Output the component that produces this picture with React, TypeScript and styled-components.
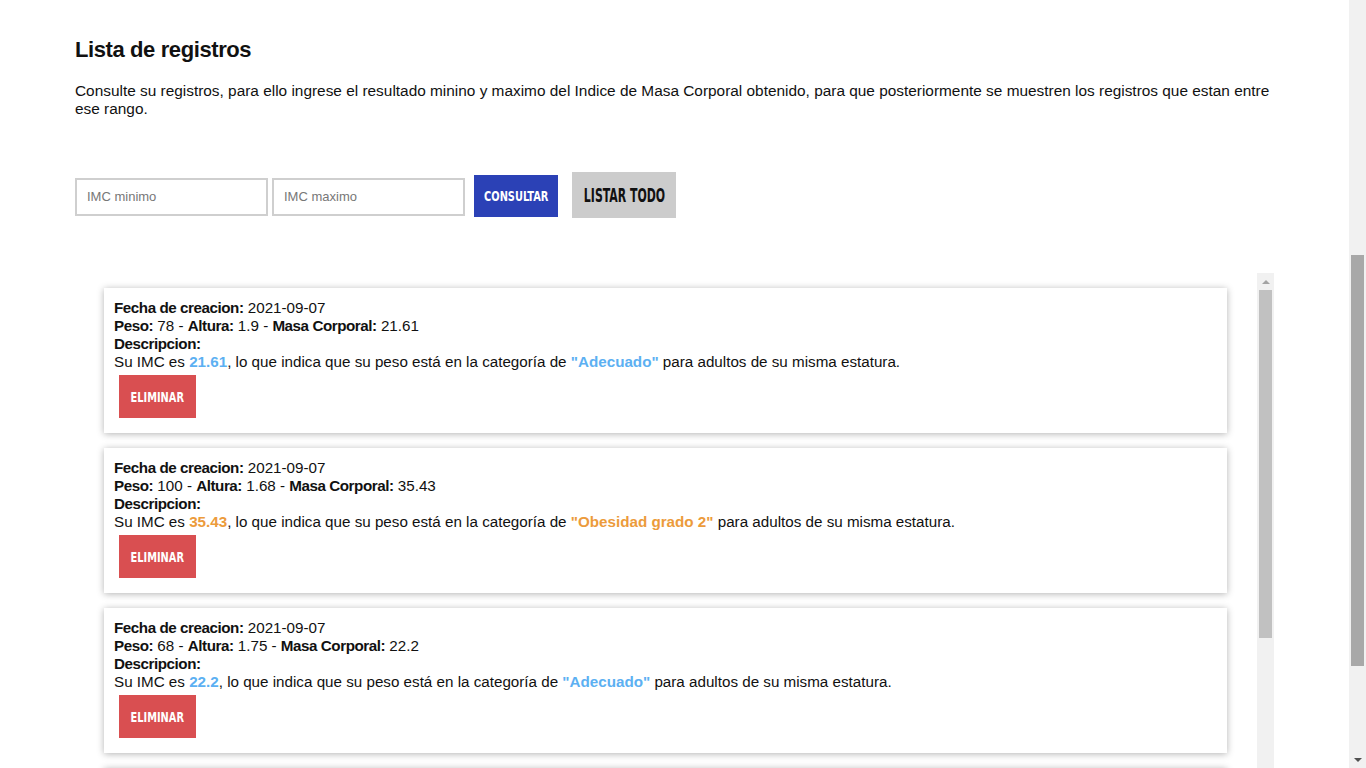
import React from "react";
import styled, { createGlobalStyle } from "styled-components";

const GlobalStyle = createGlobalStyle`
  html, body {
    margin: 0;
    padding: 0;
    background: #fff;
    color: #111;
    font-family: "Liberation Sans", Arial, sans-serif;
  }
`;

const Page = styled.main`
  padding: 36px 92px 0 75px;
`;

const Title = styled.h2`
  margin: 0 0 18px;
  font-size: 22px;
  font-weight: 700;
  letter-spacing: -0.4px;
  line-height: 28px;
`;

const Intro = styled.p`
  margin: 0;
  font-size: 15.4px;
  line-height: 18px;
`;

const Toolbar = styled.div`
  display: flex;
  align-items: center;
  gap: 4px;
  margin-top: 54px;
  height: 46px;
`;

const Input = styled.input`
  box-sizing: border-box;
  width: 193px;
  height: 38px;
  margin-top: 3px;
  border: 2px solid #cfcfcf;
  padding: 0 10px;
  font-family: "Liberation Sans", Arial, sans-serif;
  font-size: 13px;
  outline: none;
  &::placeholder {
    color: #777;
  }
`;

const Button = styled.button<{ $variant: "blue" | "gray" | "red" }>`
  border: none;
  cursor: pointer;
  padding: 0;
  display: flex;
  align-items: center;
  justify-content: center;
  ${({ $variant }) =>
    $variant === "blue"
      ? `background:#2b41b6;color:#fff;width:84px;height:42px;font-size:14px;margin-left:5px;margin-top:1px;`
      : $variant === "gray"
      ? `background:#cccccc;color:#111;width:104px;height:46px;font-size:19px;margin-left:10px;`
      : `background:#d94f51;color:#fff;width:77px;height:43px;font-size:14px;`}
`;

const ButtonText = styled.span<{ $squeeze?: number }>`
  display: inline-block;
  font-family: "DejaVu Sans Condensed", "DejaVu Sans", sans-serif;
  font-stretch: condensed;
  font-weight: 700;
  text-transform: uppercase;
  white-space: nowrap;
  transform: scaleX(${({ $squeeze }) => $squeeze ?? 0.78});
`;

const ListFrame = styled.div`
  display: flex;
  margin-top: 55px;
  height: 560px;
`;

const ListScroll = styled.div`
  flex: 1;
  overflow: hidden;
  padding: 15px 30px 0 29px;
  display: flex;
  flex-direction: column;
  gap: 15px;
`;

const ScrollTrack = styled.div<{ $fixed?: boolean }>`
  flex: none;
  width: 17px;
  background: #f1f1f1;
  display: flex;
  flex-direction: column;
  align-items: center;
  ${({ $fixed }) =>
    $fixed ? "position: fixed; top: 0; right: 0; bottom: 0;" : ""}
`;

const ScrollArrow = styled.div<{ $dir: "up" | "down" }>`
  flex: none;
  height: 17px;
  width: 17px;
  display: flex;
  align-items: center;
  justify-content: center;
  &::before {
    content: "";
    border-left: 4px solid transparent;
    border-right: 4px solid transparent;
    ${({ $dir }) =>
      $dir === "up" ? "border-bottom: 4px solid #a3a3a3;" : "border-top: 4px solid #505050;"}
  }
`;

const ScrollThumb = styled.div<{ $top: number; $size: number; $color: string }>`
  flex: none;
  width: 13px;
  margin-top: ${({ $top }) => $top}px;
  height: ${({ $size }) => $size}px;
  background: ${({ $color }) => $color};
`;

const Spacer = styled.div`
  flex: 1;
`;

const Card = styled.div`
  flex: none;
  background: #fff;
  box-shadow: 0 1px 7px rgba(0, 0, 0, 0.3);
  padding: 11px 10px 15px;
  font-size: 15.2px;
  line-height: 18px;
`;

const Label = styled.b`
  font-weight: 700;
  letter-spacing: -0.45px;
`;

const Highlight = styled.b<{ $color: string }>`
  color: ${({ $color }) => $color};
  font-weight: 700;
`;

const Actions = styled.div`
  margin-top: 4px;
  padding-left: 5px;
`;

type Registro = {
  fecha: string;
  peso: number;
  altura: number;
  imc: number;
  categoria: string;
  color: string;
};

const registros: Registro[] = [
  { fecha: "2021-09-07", peso: 78, altura: 1.9, imc: 21.61, categoria: "Adecuado", color: "#5cb0f2" },
  { fecha: "2021-09-07", peso: 100, altura: 1.68, imc: 35.43, categoria: "Obesidad grado 2", color: "#ec9b3b" },
  { fecha: "2021-09-07", peso: 68, altura: 1.75, imc: 22.2, categoria: "Adecuado", color: "#5cb0f2" },
  { fecha: "2021-09-07", peso: 55, altura: 1.6, imc: 21.48, categoria: "Adecuado", color: "#5cb0f2" },
];

const RegistroCard: React.FC<{ r: Registro }> = ({ r }) => (
  <Card>
    <div>
      <Label>Fecha de creacion:</Label> {r.fecha}
    </div>
    <div>
      <Label>Peso:</Label> {r.peso} - <Label>Altura:</Label> {r.altura} -{" "}
      <Label>Masa Corporal:</Label> {r.imc}
    </div>
    <div>
      <Label>Descripcion:</Label>
    </div>
    <div>
      Su IMC es <Highlight $color={r.color}>{r.imc}</Highlight>, lo que indica que su peso está en la
      categoría de <Highlight $color={r.color}>"{r.categoria}"</Highlight> para adultos de su misma
      estatura.
    </div>
    <Actions>
      <Button $variant="red">
        <ButtonText>Eliminar</ButtonText>
      </Button>
    </Actions>
  </Card>
);

export default function App() {
  return (
    <>
      <GlobalStyle />
      <Page>
        <Title>Lista de registros</Title>
        <Intro>
          Consulte su registros, para ello ingrese el resultado minino y maximo del Indice de Masa
          Corporal obtenido, para que posteriormente se muestren los registros que estan entre ese
          rango.
        </Intro>
        <Toolbar>
          <Input placeholder="IMC minimo" />
          <Input placeholder="IMC maximo" />
          <Button $variant="blue">
            <ButtonText>Consultar</ButtonText>
          </Button>
          <Button $variant="gray">
            <ButtonText $squeeze={0.64}>Listar todo</ButtonText>
          </Button>
        </Toolbar>
        <ListFrame>
          <ListScroll>
            {registros.map((r, i) => (
              <RegistroCard key={i} r={r} />
            ))}
          </ListScroll>
          <ScrollTrack>
            <ScrollArrow $dir="up" />
            <ScrollThumb $top={0} $size={348} $color="#c1c1c1" />
          </ScrollTrack>
        </ListFrame>
      </Page>
      <ScrollTrack $fixed>
        <ScrollThumb $top={255} $size={411} $color="#a8a8a8" />
        <Spacer />
        <ScrollArrow $dir="down" />
      </ScrollTrack>
    </>
  );
}
